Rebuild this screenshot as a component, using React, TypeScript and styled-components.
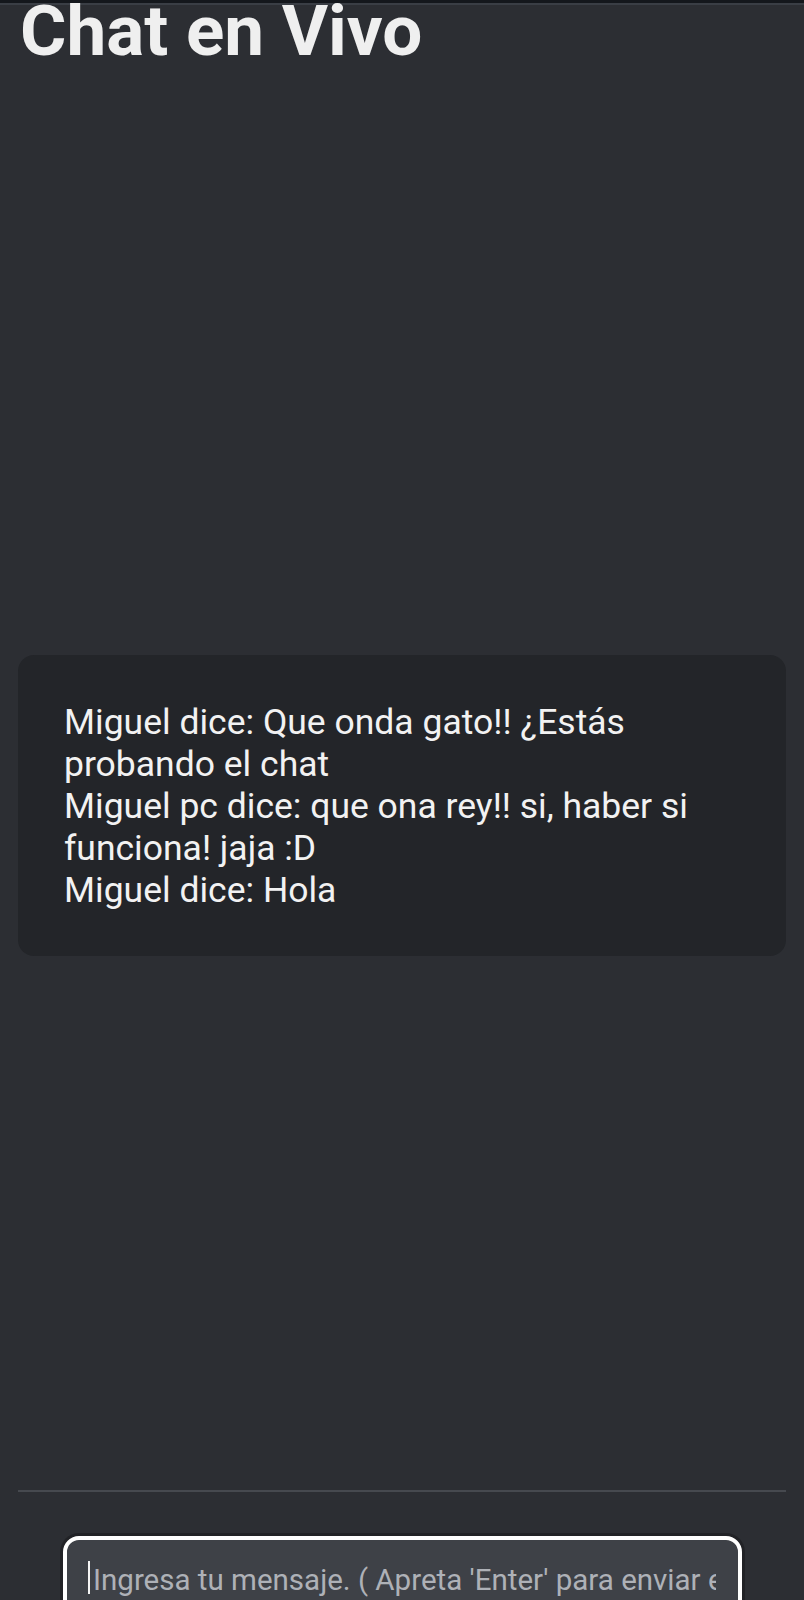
import styled, { createGlobalStyle } from "styled-components";

const GlobalStyle = createGlobalStyle`
  html, body {
    margin: 0;
    padding: 0;
    background: #2c2e33;
  }
  body {
    font-family: Roboto, "Liberation Sans", sans-serif;
    color: #f1f1f1;
  }
`

const messages = [
  { user: "Miguel", text: "Que onda gato!! ¿Estás probando el chat" },
  { user: "Miguel pc", text: "que ona rey!! si, haber si funciona! jaja :D" },
  { user: "Miguel", text: "Hola" },
]

export default function App() {
  return (
    <>
      <GlobalStyle />
      <Page>
        <Title>Chat en Vivo</Title>
        <ChatBox>
          {messages.map((m, i) => (
            <Message key={i}>{m.user} dice: {m.text}</Message>
          ))}
        </ChatBox>
        <Divider />
        <InputWrap>
          <Caret />
          <MessageInput placeholder="Ingresa tu mensaje. ( Apreta 'Enter' para enviar el mensaje )" />
        </InputWrap>
      </Page>
    </>
  )
}

const Page = styled.div`
  height: 1600px;
  overflow: hidden;
  border-top: 3px solid #14171c;
  &::before {
    content: "";
    display: block;
    height: 2px;
    background: #3a3e45;
  }
`

const Title = styled.h1`
  margin: 0 0 0 20px;
  font-size: 71px;
  line-height: 52px;
  font-weight: 700;
  color: #efefef;
`

const ChatBox = styled.div`
  margin: 598px 18px 0;
  height: 301px;
  box-sizing: border-box;
  padding: 46px 40px 45px 46px;
  background: #232529;
  border-radius: 16px;
`

const Message = styled.div`
  font-size: 35.5px;
  line-height: 42px;
  color: #f2f2f2;
`

const Divider = styled.hr`
  margin: 534px 18px 0;
  border: 0;
  height: 2px;
  background: #46494f;
`

const InputWrap = styled.div`
  position: relative;
  margin: 44px 0 0 63px;
  width: 679px;
`

const Caret = styled.span`
  position: absolute;
  left: 25px;
  top: 25px;
  width: 2px;
  height: 33px;
  background: #f4f4f4;
`

const MessageInput = styled.input`
  display: block;
  width: 100%;
  height: 100px;
  box-sizing: border-box;
  padding: 0 22px 12px 26px;
  border: 4px solid #ffffff;
  border-radius: 16px;
  background: #3e4147;
  box-shadow: 0 0 0 3px rgba(0, 0, 0, 0.25);
  font-family: Roboto, "Liberation Sans", sans-serif;
  font-size: 29.5px;
  color: #f1f1f1;
  outline: none;
  &::placeholder {
    color: #aeb1b7;
  }
`
